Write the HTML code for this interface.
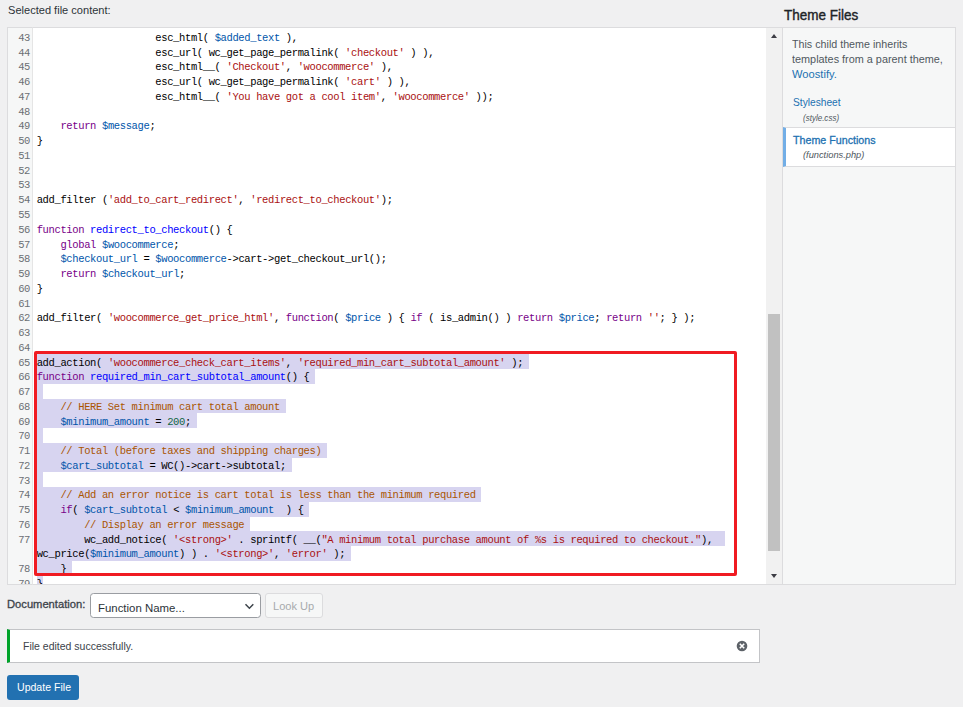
<!DOCTYPE html>
<html><head><meta charset="utf-8">
<style>
html,body{margin:0;padding:0}
body{width:963px;height:707px;overflow:hidden;position:relative;background:#f0f0f1;font-family:"Liberation Sans",sans-serif;color:#1d2327}
.tx{position:absolute;white-space:pre;line-height:1;transform-origin:0 0}
#lbl{left:7.5px;top:4.1px;font-size:11.3px;color:#1d2327}
#tf{left:783.4px;top:7.2px;font-size:14.4px;font-weight:bold;color:#1d2327}
#ed{position:absolute;left:7px;top:27px;width:775px;height:558px;box-sizing:border-box;border:1px solid #dcdcde;background:#fff;overflow:hidden}
#gut{position:absolute;left:7px;top:27px;width:26px;height:558px;box-sizing:border-box;background:#f6f7f7;border:1px solid #dcdcde;border-right-color:#e5e5e5}
#clip{position:absolute;left:8px;top:28px;width:758px;height:556px;overflow:hidden}
#clip > div{position:absolute}
.ln{position:absolute;left:28.7px;white-space:pre;font-family:"Liberation Mono",monospace;font-size:10.5px;letter-spacing:-0.37px;padding-top:1.3px;line-height:14.78px;height:14.78px;color:#000}
.gn{position:absolute;left:0;width:22px;text-align:right;white-space:pre;font-family:"Liberation Mono",monospace;font-size:10.5px;letter-spacing:-0.37px;padding-top:1.3px;line-height:14.78px;color:#6b6f74}
.sel{position:absolute;left:28.7px;height:14.78px;background:#d7d4f0}
.k{color:#770088}.v{color:#0055aa}.s{color:#aa1111}.d{color:#0000ff}.c{color:#aa5500}.n{color:#116644}
#sb{position:absolute;left:766px;top:28px;width:16px;height:556px;background:#f1f1f1}
#thumb{position:absolute;left:768px;top:314px;width:12px;height:237px;background:#c1c1c1}
.tri{position:absolute;width:0;height:0;border-left:3.5px solid transparent;border-right:3.5px solid transparent}
#red{position:absolute;left:33.5px;top:350.6px;width:703.3px;height:225.6px;box-sizing:border-box;border:3px solid #f01b22;border-radius:2px}
#side{position:absolute;left:782px;top:27px;width:174px;height:558px;box-sizing:border-box;background:#f6f7f7;border:1px solid #dcdcde}
.st{position:absolute;white-space:pre;line-height:1;font-size:11px;color:#50575e}
.lk{color:#2271b1}
.it{font-style:italic;font-size:9px;color:#50575e}
#act{position:absolute;left:783px;top:126.6px;width:173px;height:40px;box-sizing:border-box;background:#fff;border-top:1px solid #dcdcde;border-bottom:1px solid #dcdcde;border-right:1px solid #dcdcde;border-left:3px solid #72aee6}
#doc{left:7.8px;top:599px;font-size:10.9px;font-weight:bold;color:#1d2327}
#sel{position:absolute;left:89.8px;top:593.3px;width:171.5px;height:25px;box-sizing:border-box;background:#fff;border:1px solid #9a9da2;border-radius:3.5px}
#look{position:absolute;left:265.2px;top:593.3px;width:57.5px;height:25px;box-sizing:border-box;background:#f6f7f7;border:1px solid #dcdcde;border-radius:3px}
#notice{position:absolute;left:7.3px;top:629px;width:753px;height:33.5px;box-sizing:border-box;background:#fff;border:1px solid #c3c4c7;border-left:3px solid #00a32a}
#upd{position:absolute;left:7.3px;top:674.8px;width:72px;height:25px;box-sizing:border-box;background:#2271b1;border-radius:3px}
</style></head><body>

<div id="ed"></div>
<div id="gut"></div>
<div id="clip">
<div class="sel" style="top:326.32px;width:492.19px"></div>
<div class="sel" style="top:341.08px;width:278.71px"></div>
<div class="sel" style="top:355.84px;width:5.93px"></div>
<div class="sel" style="top:370.60px;width:249.06px"></div>
<div class="sel" style="top:385.36px;width:160.11px"></div>
<div class="sel" style="top:400.12px;width:5.93px"></div>
<div class="sel" style="top:414.88px;width:290.57px"></div>
<div class="sel" style="top:429.64px;width:254.99px"></div>
<div class="sel" style="top:444.40px;width:5.93px"></div>
<div class="sel" style="top:459.16px;width:444.75px"></div>
<div class="sel" style="top:473.92px;width:272.78px"></div>
<div class="sel" style="top:488.68px;width:213.48px"></div>
<div class="sel" style="top:503.44px;width:687.88px"></div>
<div class="sel" style="top:518.20px;width:314.29px"></div>
<div class="sel" style="top:532.96px;width:35.58px"></div>
<div class="sel" style="top:547.72px;width:5.93px"></div>
<div class="ln" style="top:1.60px">                    esc_html( <span class="v">$added_text</span> ),</div>
<div class="ln" style="top:16.36px">                    esc_url( wc_get_page_permalink( <span class="s">&#x27;checkout&#x27;</span> ) ),</div>
<div class="ln" style="top:31.12px">                    esc_html__( <span class="s">&#x27;Checkout&#x27;</span>, <span class="s">&#x27;woocommerce&#x27;</span> ),</div>
<div class="ln" style="top:45.88px">                    esc_url( wc_get_page_permalink( <span class="s">&#x27;cart&#x27;</span> ) ),</div>
<div class="ln" style="top:60.64px">                    esc_html__( <span class="s">&#x27;You have got a cool item&#x27;</span>, <span class="s">&#x27;woocommerce&#x27;</span> ));</div>
<div class="ln" style="top:75.40px"></div>
<div class="ln" style="top:90.16px">    <span class="k">return</span> <span class="v">$message</span>;</div>
<div class="ln" style="top:104.92px">}</div>
<div class="ln" style="top:119.68px"></div>
<div class="ln" style="top:134.44px"></div>
<div class="ln" style="top:149.20px"></div>
<div class="ln" style="top:163.96px">add_filter (<span class="s">&#x27;add_to_cart_redirect&#x27;</span>, <span class="s">&#x27;redirect_to_checkout&#x27;</span>);</div>
<div class="ln" style="top:178.72px"></div>
<div class="ln" style="top:193.48px"><span class="k">function</span> <span class="d">redirect_to_checkout</span>() {</div>
<div class="ln" style="top:208.24px">    <span class="k">global</span> <span class="v">$woocommerce</span>;</div>
<div class="ln" style="top:223.00px">    <span class="v">$checkout_url</span> = <span class="v">$woocommerce</span>-&gt;cart-&gt;get_checkout_url();</div>
<div class="ln" style="top:237.76px">    <span class="k">return</span> <span class="v">$checkout_url</span>;</div>
<div class="ln" style="top:252.52px">}</div>
<div class="ln" style="top:267.28px"></div>
<div class="ln" style="top:282.04px">add_filter( <span class="s">&#x27;woocommerce_get_price_html&#x27;</span>, <span class="k">function</span>( <span class="v">$price</span> ) { <span class="k">if</span> ( is_admin() ) <span class="k">return</span> <span class="v">$price</span>; <span class="k">return</span> <span class="s">&#x27;&#x27;</span>; } );</div>
<div class="ln" style="top:296.80px"></div>
<div class="ln" style="top:311.56px"></div>
<div class="ln" style="top:326.32px">add_action( <span class="s">&#x27;woocommerce_check_cart_items&#x27;</span>, <span class="s">&#x27;required_min_cart_subtotal_amount&#x27;</span> );</div>
<div class="ln" style="top:341.08px"><span class="k">function</span> <span class="d">required_min_cart_subtotal_amount</span>() {</div>
<div class="ln" style="top:355.84px"></div>
<div class="ln" style="top:370.60px">    <span class="c">// HERE Set minimum cart total amount</span></div>
<div class="ln" style="top:385.36px">    <span class="v">$minimum_amount</span> = <span class="n">200</span>;</div>
<div class="ln" style="top:400.12px"></div>
<div class="ln" style="top:414.88px">    <span class="c">// Total (before taxes and shipping charges)</span></div>
<div class="ln" style="top:429.64px">    <span class="v">$cart_subtotal</span> = WC()-&gt;cart-&gt;subtotal;</div>
<div class="ln" style="top:444.40px"></div>
<div class="ln" style="top:459.16px">    <span class="c">// Add an error notice is cart total is less than the minimum required</span></div>
<div class="ln" style="top:473.92px">    <span class="k">if</span>( <span class="v">$cart_subtotal</span> &lt; <span class="v">$minimum_amount</span>  ) {</div>
<div class="ln" style="top:488.68px">        <span class="c">// Display an error message</span></div>
<div class="ln" style="top:503.44px">        wc_add_notice( <span class="s">&#x27;&lt;strong&gt;&#x27;</span> . sprintf( __(<span class="s">&quot;A minimum total purchase amount of %s is required to checkout.&quot;</span>), </div>
<div class="ln" style="top:518.20px">wc_price(<span class="v">$minimum_amount</span>) ) . <span class="s">&#x27;&lt;strong&gt;&#x27;</span>, <span class="s">&#x27;error&#x27;</span> );</div>
<div class="ln" style="top:532.96px">    }</div>
<div class="ln" style="top:547.72px">}</div>
</div>
<div id="gutnums" style="position:absolute;left:8px;top:28px;width:24px;height:556px;overflow:hidden">
<div class="gn" style="top:1.60px">43</div>
<div class="gn" style="top:16.36px">44</div>
<div class="gn" style="top:31.12px">45</div>
<div class="gn" style="top:45.88px">46</div>
<div class="gn" style="top:60.64px">47</div>
<div class="gn" style="top:75.40px">48</div>
<div class="gn" style="top:90.16px">49</div>
<div class="gn" style="top:104.92px">50</div>
<div class="gn" style="top:119.68px">51</div>
<div class="gn" style="top:134.44px">52</div>
<div class="gn" style="top:149.20px">53</div>
<div class="gn" style="top:163.96px">54</div>
<div class="gn" style="top:178.72px">55</div>
<div class="gn" style="top:193.48px">56</div>
<div class="gn" style="top:208.24px">57</div>
<div class="gn" style="top:223.00px">58</div>
<div class="gn" style="top:237.76px">59</div>
<div class="gn" style="top:252.52px">60</div>
<div class="gn" style="top:267.28px">61</div>
<div class="gn" style="top:282.04px">62</div>
<div class="gn" style="top:296.80px">63</div>
<div class="gn" style="top:311.56px">64</div>
<div class="gn" style="top:326.32px">65</div>
<div class="gn" style="top:341.08px">66</div>
<div class="gn" style="top:355.84px">67</div>
<div class="gn" style="top:370.60px">68</div>
<div class="gn" style="top:385.36px">69</div>
<div class="gn" style="top:400.12px">70</div>
<div class="gn" style="top:414.88px">71</div>
<div class="gn" style="top:429.64px">72</div>
<div class="gn" style="top:444.40px">73</div>
<div class="gn" style="top:459.16px">74</div>
<div class="gn" style="top:473.92px">75</div>
<div class="gn" style="top:488.68px">76</div>
<div class="gn" style="top:503.44px">77</div>
<div class="gn" style="top:532.96px">78</div>
<div class="gn" style="top:547.72px">79</div>
</div>
<div id="red"></div>
<div id="sb"></div>
<div id="thumb"></div>
<div class="tri" style="left:770.6px;top:33.8px;border-bottom:4px solid #3c3c44;border-left-width:3.7px;border-right-width:3.7px"></div>
<div class="tri" style="left:770.6px;top:573.6px;border-top:4px solid #3c3c44;border-left-width:3.6px;border-right-width:3.6px"></div>

<div id="side"></div>
<div id="act"></div>

<div id="sel"></div>
<svg style="position:absolute;left:244px;top:603px" width="12" height="7" viewBox="0 0 12 7"><path d="M1.5 1.3 L5.4 5.2 L9.3 1.3" fill="none" stroke="#3c434a" stroke-width="1.5"/></svg>
<div id="look"></div>

<div id="notice"></div>
<svg style="position:absolute;left:736px;top:640px" width="12" height="12" viewBox="0 0 12 12"><circle cx="6" cy="6" r="5.3" fill="#5d6268"/><path d="M3.8 3.8 L8.2 8.2 M8.2 3.8 L3.8 8.2" stroke="#fff" stroke-width="1.6"/></svg>

<div id="upd"></div>
<div id="t_lbl" class="tx" style="left:7.50px;top:4.83px;font-size:11.3px;transform:scaleX(0.9789);color:#2c3338">Selected file content:</div>
<div id="t_tf" class="tx" style="left:783.54px;top:7.51px;font-size:14.4px;transform:scaleX(0.9363);color:#1d2327;-webkit-text-stroke:0.4px #1d2327">Theme Files</div>
<div id="t_c1" class="tx" style="left:792.48px;top:39.29px;font-size:11px;transform:scaleX(0.9731);color:#50575e">This child theme inherits</div>
<div id="t_c2" class="tx" style="left:792.48px;top:54.19px;font-size:11px;transform:scaleX(0.9869);color:#50575e">templates from a parent theme,</div>
<div id="t_c3" class="tx" style="left:792.48px;top:68.99px;font-size:11px;transform:scaleX(1.0137);color:#2271b1">Woostify.</div>
<div id="t_ss" class="tx" style="left:793.00px;top:97.39px;font-size:11px;transform:scaleX(0.9272);color:#2271b1">Stylesheet</div>
<div id="t_sc" class="tx" style="left:803.00px;top:113.68px;font-size:9px;transform:scaleX(0.8904);font-style:italic;color:#50575e">(style.css)</div>
<div id="t_thf" class="tx" style="left:793.00px;top:135.09px;font-size:11px;transform:scaleX(0.9718);color:#2271b1;-webkit-text-stroke:0.3px #2271b1">Theme Functions</div>
<div id="t_fp" class="tx" style="left:803.34px;top:151.48px;font-size:9px;transform:scaleX(1.0303);font-style:italic;color:#50575e">(functions.php)</div>
<div id="t_doc" class="tx" style="left:7.38px;top:599.07px;font-size:10.9px;transform:scaleX(1.0263);color:#3c434a;-webkit-text-stroke:0.3px #3c434a">Documentation:</div>
<div id="t_fn" class="tx" style="left:97.50px;top:601.58px;font-size:11.6px;transform:scaleX(0.9840);color:#2c3338">Function Name...</div>
<div id="t_lu" class="tx" style="left:273.44px;top:600.48px;font-size:11.6px;transform:scaleX(0.9528);color:#a7aaad">Look Up</div>
<div id="t_ok" class="tx" style="left:22.66px;top:640.92px;font-size:11.2px;transform:scaleX(0.9385);color:#3c434a">File edited successfully.</div>
<div id="t_up" class="tx" style="left:17.00px;top:682.32px;font-size:11.2px;transform:scaleX(0.9440);color:#ffffff">Update File</div>
</body></html>
